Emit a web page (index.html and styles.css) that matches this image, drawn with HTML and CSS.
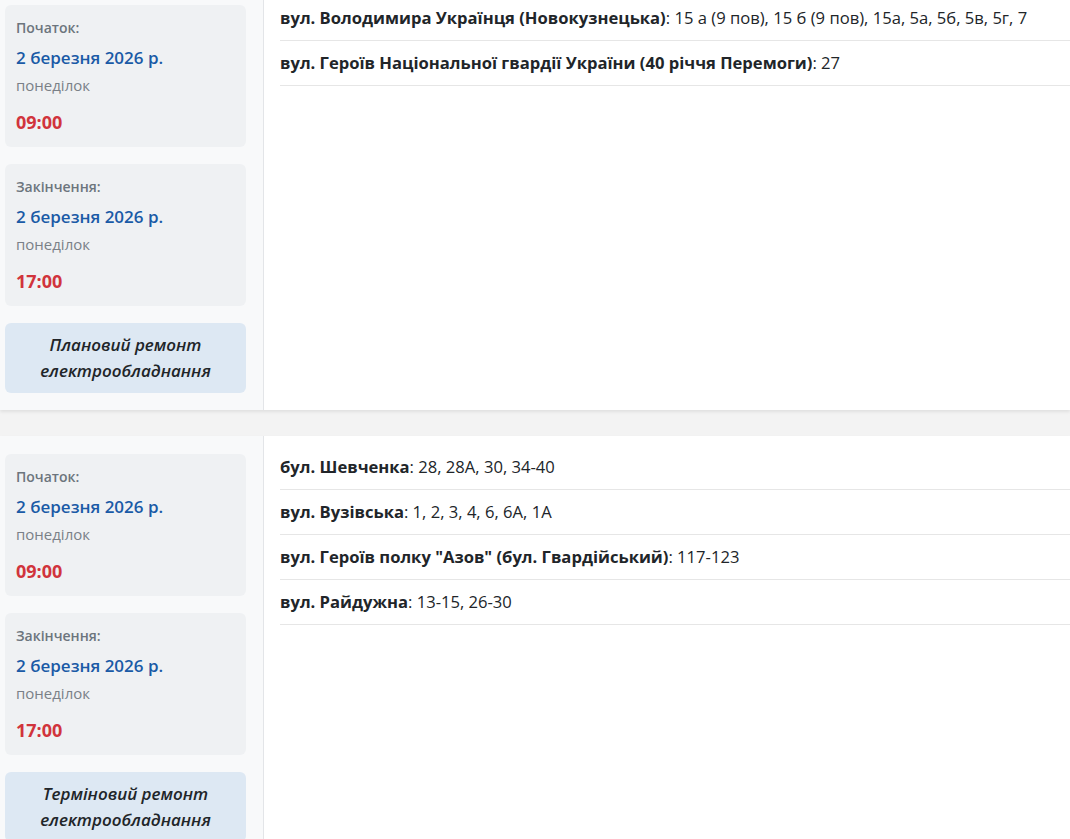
FILE: index.html
```html
<!DOCTYPE html>
<html lang="uk">
<head>
<meta charset="utf-8">
<link rel="stylesheet" href="styles.css">
</head>
<body>
<div class="page">
  <section class="card first">
    <aside class="side">
      <div class="tbox">
        <div class="lbl">Початок:</div>
        <div class="date">2 березня 2026 р.</div>
        <div class="day">понеділок</div>
        <div class="time">09:00</div>
      </div>
      <div class="tbox">
        <div class="lbl">Закінчення:</div>
        <div class="date">2 березня 2026 р.</div>
        <div class="day">понеділок</div>
        <div class="time">17:00</div>
      </div>
      <div class="reason">Плановий ремонт електрообладнання</div>
    </aside>
    <div class="main">
      <div class="row"><b>вул. Володимира Українця (Новокузнецька)</b>: 15 а (9 пов), 15 б (9 пов), 15а, 5а, 5б, 5в, 5г, 7</div>
      <div class="row"><b>вул. Героїв Національної гвардії України (40 річчя Перемоги)</b>: 27</div>
    </div>
  </section>
  <section class="card">
    <aside class="side">
      <div class="tbox">
        <div class="lbl">Початок:</div>
        <div class="date">2 березня 2026 р.</div>
        <div class="day">понеділок</div>
        <div class="time">09:00</div>
      </div>
      <div class="tbox">
        <div class="lbl">Закінчення:</div>
        <div class="date">2 березня 2026 р.</div>
        <div class="day">понеділок</div>
        <div class="time">17:00</div>
      </div>
      <div class="reason">Терміновий ремонт електрообладнання</div>
    </aside>
    <div class="main">
      <div class="row"><b>бул. Шевченка</b>: 28, 28А, 30, 34-40</div>
      <div class="row"><b>вул. Вузівська</b>: 1, 2, 3, 4, 6, 6А, 1А</div>
      <div class="row"><b>вул. Героїв полку "Азов" (бул. Гвардійський)</b>: 117-123</div>
      <div class="row"><b>вул. Райдужна</b>: 13-15, 26-30</div>
    </div>
  </section>
</div>
</body>
</html>
```
FILE: styles.css
```css
html, body {
  margin: 0;
  padding: 0;
  background: #f3f3f3;
}
body {
  font-family: "Open Sans", "Noto Sans", sans-serif;
  color: #212529;
  font-size: 16px;
  overflow: hidden;
}
.page {
  display: flex;
  flex-direction: column;
  gap: 26px;
  margin-top: -13px;
}
.card {
  display: flex;
  background: #fff;
  box-shadow: 0 2px 3px rgba(0,0,0,0.08);
}
.side {
  width: 241px;
  flex: none;
  background: #f8f9fa;
  border-right: 1px solid #e3e5e8;
  padding: 18px 17px 17px 5px;
  display: flex;
  flex-direction: column;
  gap: 17px;
}
.tbox {
  background: #eff1f3;
  border-radius: 6px;
  padding: 12px 11px 12px;
}
.lbl {
  font-size: 14px;
  line-height: 21px;
  font-weight: 600;
  color: #6c757d;
}
.date {
  margin-top: 6px;
  font-size: 17px;
  line-height: 27px;
  font-weight: 600;
  color: #1a5aa6;
}
.day {
  margin-top: 3px;
  font-size: 15px;
  line-height: 22px;
  color: #7a8087;
}
.time {
  margin-top: 13px;
  font-size: 18px;
  line-height: 26px;
  font-weight: 700;
  color: #d1343c;
}
.reason {
  background: #dde8f3;
  border-radius: 6px;
  padding: 9px 16px;
  text-align: center;
  font-style: italic;
  font-weight: 600;
  font-size: 17px;
  line-height: 26px;
  color: #212529;
}
.main {
  flex: 1;
  padding: 9px 0 0 16px;
}
.row {
  padding: 10px 0;
  font-size: 16.6px;
  line-height: 24px;
  border-bottom: 1px solid #e6e6e6;
}
.row b {
  font-weight: 700;
}
```
